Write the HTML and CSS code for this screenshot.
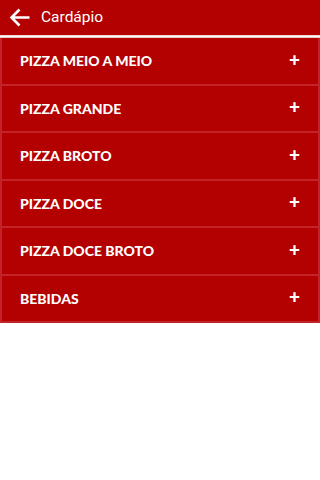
FILE: index.html
```html
<!DOCTYPE html>
<html lang="pt">
<head>
<meta charset="utf-8">
<link rel="stylesheet" href="styles.css">
</head>
<body>
<header class="topbar">
  <svg class="back" width="21" height="19" viewBox="0 0 21 19"><path d="M20.5 9.5H3M10.5 1.5L2.5 9.5l8 8" fill="none" stroke="#fff" stroke-width="2.6"/></svg>
  <span class="title">Cardápio</span>
</header>
<div class="divider"></div>
<ul class="menu">
  <li class="item"><span>PIZZA MEIO A MEIO</span><span class="plus">+</span></li>
  <li class="item"><span>PIZZA GRANDE</span><span class="plus">+</span></li>
  <li class="item"><span>PIZZA BROTO</span><span class="plus">+</span></li>
  <li class="item"><span>PIZZA DOCE</span><span class="plus">+</span></li>
  <li class="item"><span>PIZZA DOCE BROTO</span><span class="plus">+</span></li>
  <li class="item"><span>BEBIDAS</span><span class="plus">+</span></li>
</ul>
</body>
</html>
```
FILE: styles.css
```css
html, body { margin: 0; padding: 0; background: #fff; }
body { width: 320px; height: 480px; font-family: Roboto, "Noto Sans", sans-serif; }
.topbar {
  height: 35px;
  background: #b30000;
  display: flex;
  align-items: center;
  padding-left: 9px;
  box-sizing: border-box;
}
.back { display: block; }
.title { color: #fff; font-size: 15.5px; margin-left: 11px; margin-top: -1px; }
.divider { height: 3px; background: linear-gradient(#e8c8c8, #fdf5f5 50%, #e3b5b5); }
.menu {
  list-style: none;
  margin: 0;
  padding: 0;
  background: #b30000;
  border-left: 2px solid #c32326;
  border-right: 2px solid #c32326;
  border-bottom: 2px solid #c32326;
}
.item {
  height: 45.5px;
  display: flex;
  align-items: center;
  justify-content: space-between;
  padding: 0 18px 0 18px;
  border-bottom: 2px solid #c32326;
  color: #fff;
  font-family: Lato, sans-serif;
  font-weight: 900;
  font-size: 14px;
}
.item:last-child { border-bottom: none; }
.plus { font-size: 19px; font-weight: 900; margin-top: -3px; }
```
